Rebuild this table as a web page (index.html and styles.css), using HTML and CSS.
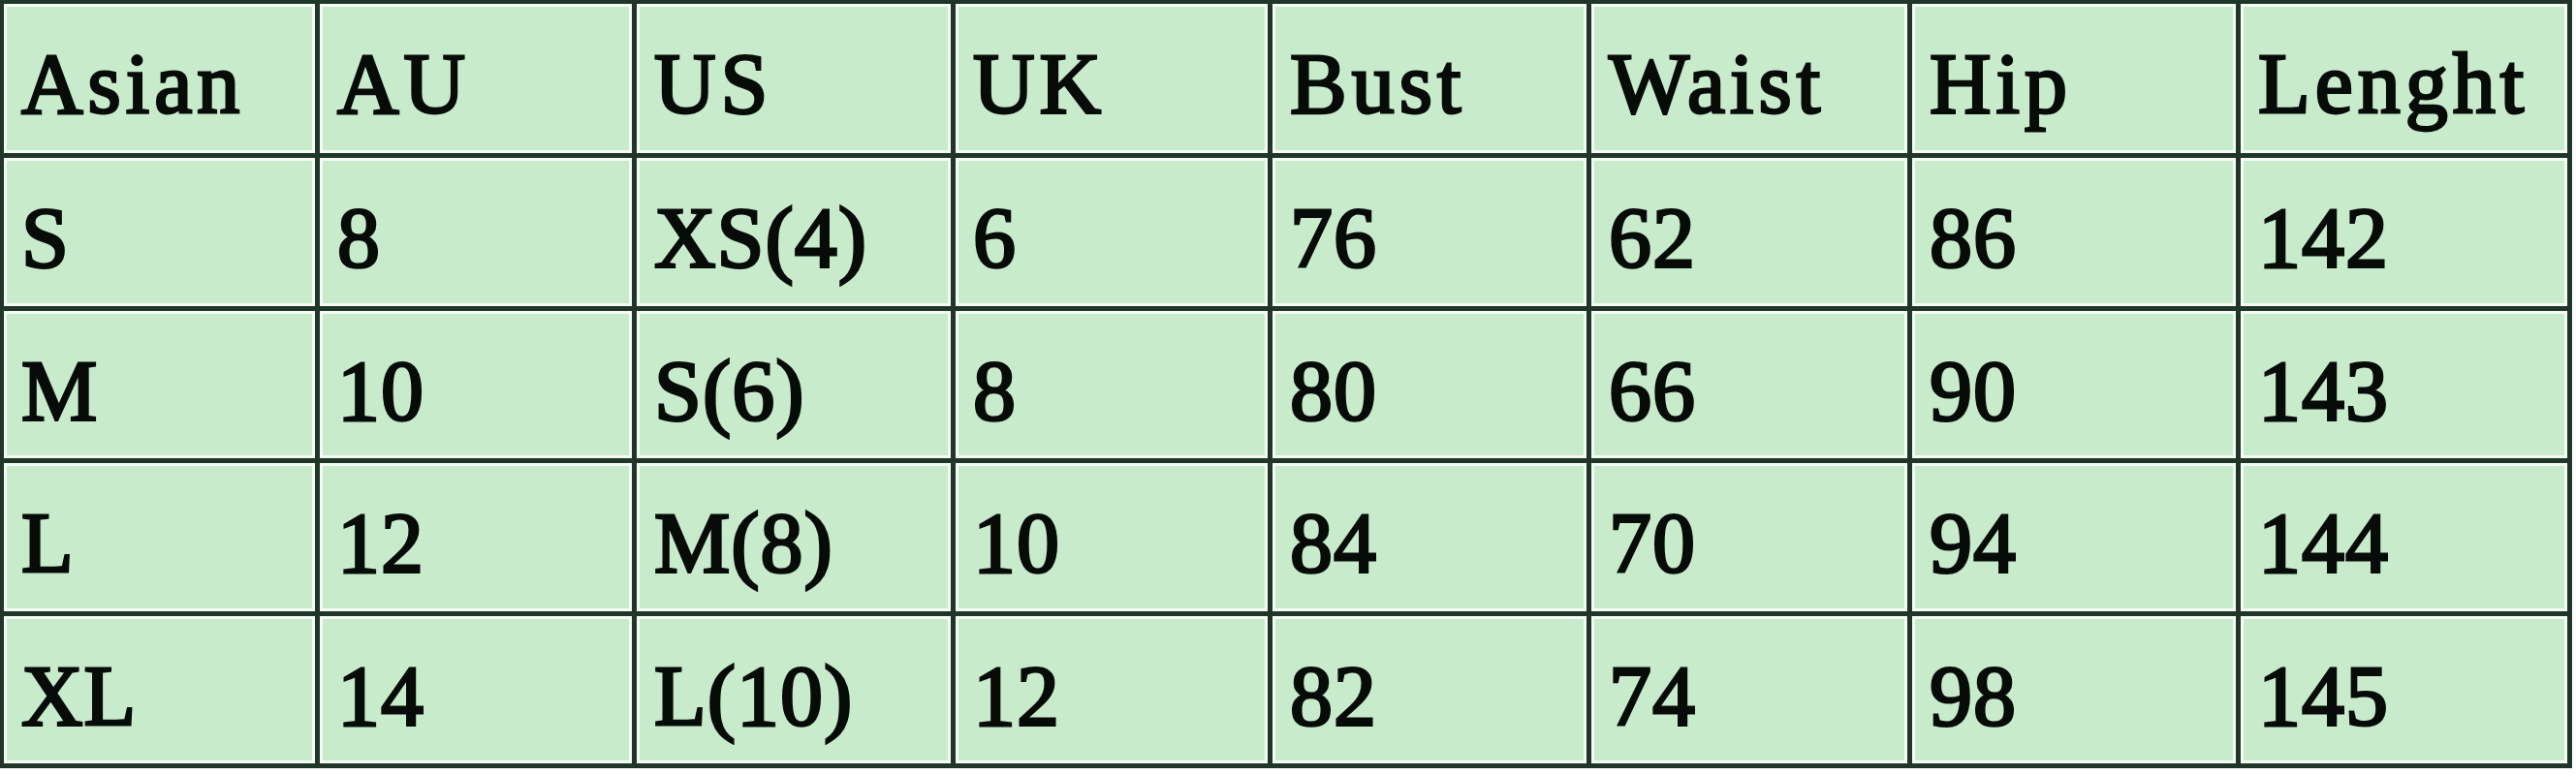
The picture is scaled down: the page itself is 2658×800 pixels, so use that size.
FILE: index.html
```html
<!DOCTYPE html>
<html lang="en">
<head>
<meta charset="utf-8">
<title>Size chart</title>
<link rel="stylesheet" href="styles.css">
</head>
<body>
<div class="chart" role="table">
  <div class="cell head" role="columnheader">Asian</div>
  <div class="cell head" role="columnheader">AU</div>
  <div class="cell head" role="columnheader">US</div>
  <div class="cell head" role="columnheader">UK</div>
  <div class="cell head" role="columnheader">Bust</div>
  <div class="cell head" role="columnheader">Waist</div>
  <div class="cell head" role="columnheader">Hip</div>
  <div class="cell head" role="columnheader">Lenght</div>

  <div class="cell">S</div>
  <div class="cell">8</div>
  <div class="cell">XS(4)</div>
  <div class="cell">6</div>
  <div class="cell">76</div>
  <div class="cell">62</div>
  <div class="cell">86</div>
  <div class="cell">142</div>

  <div class="cell">M</div>
  <div class="cell">10</div>
  <div class="cell">S(6)</div>
  <div class="cell">8</div>
  <div class="cell">80</div>
  <div class="cell">66</div>
  <div class="cell">90</div>
  <div class="cell">143</div>

  <div class="cell">L</div>
  <div class="cell">12</div>
  <div class="cell">M(8)</div>
  <div class="cell">10</div>
  <div class="cell">84</div>
  <div class="cell">70</div>
  <div class="cell">94</div>
  <div class="cell">144</div>

  <div class="cell">XL</div>
  <div class="cell">14</div>
  <div class="cell">L(10)</div>
  <div class="cell">12</div>
  <div class="cell">82</div>
  <div class="cell">74</div>
  <div class="cell">98</div>
  <div class="cell">145</div>
</div>
</body>
</html>
```

FILE: styles.css
```css
html, body {
  margin: 0;
  padding: 0;
  background: #ffffff;
}

.chart {
  display: grid;
  grid-template-columns: 321px 322px 324px 322px 324px 326px 334px 337px;
  grid-template-rows: 154px 153px 152px 153px 152px;
  gap: 5px;
  width: max-content;
  background: #203628;
  border: 4px solid #203628;
  border-right-width: 5px;
  border-bottom-width: 5px;
}

.cell {
  background: #c8ebcc;
  box-shadow: inset 0 0 0 3px #f3fbf4;
  padding: 39px 0 0 18px;
  font-family: "Liberation Serif", "Times New Roman", serif;
  font-weight: 400;
  font-size: 88px;
  line-height: 88px;
  letter-spacing: 1px;
  color: #080c09;
  -webkit-text-stroke: 2.8px #080c09;
  white-space: nowrap;
}

.head {
  letter-spacing: 5px;
}
```
